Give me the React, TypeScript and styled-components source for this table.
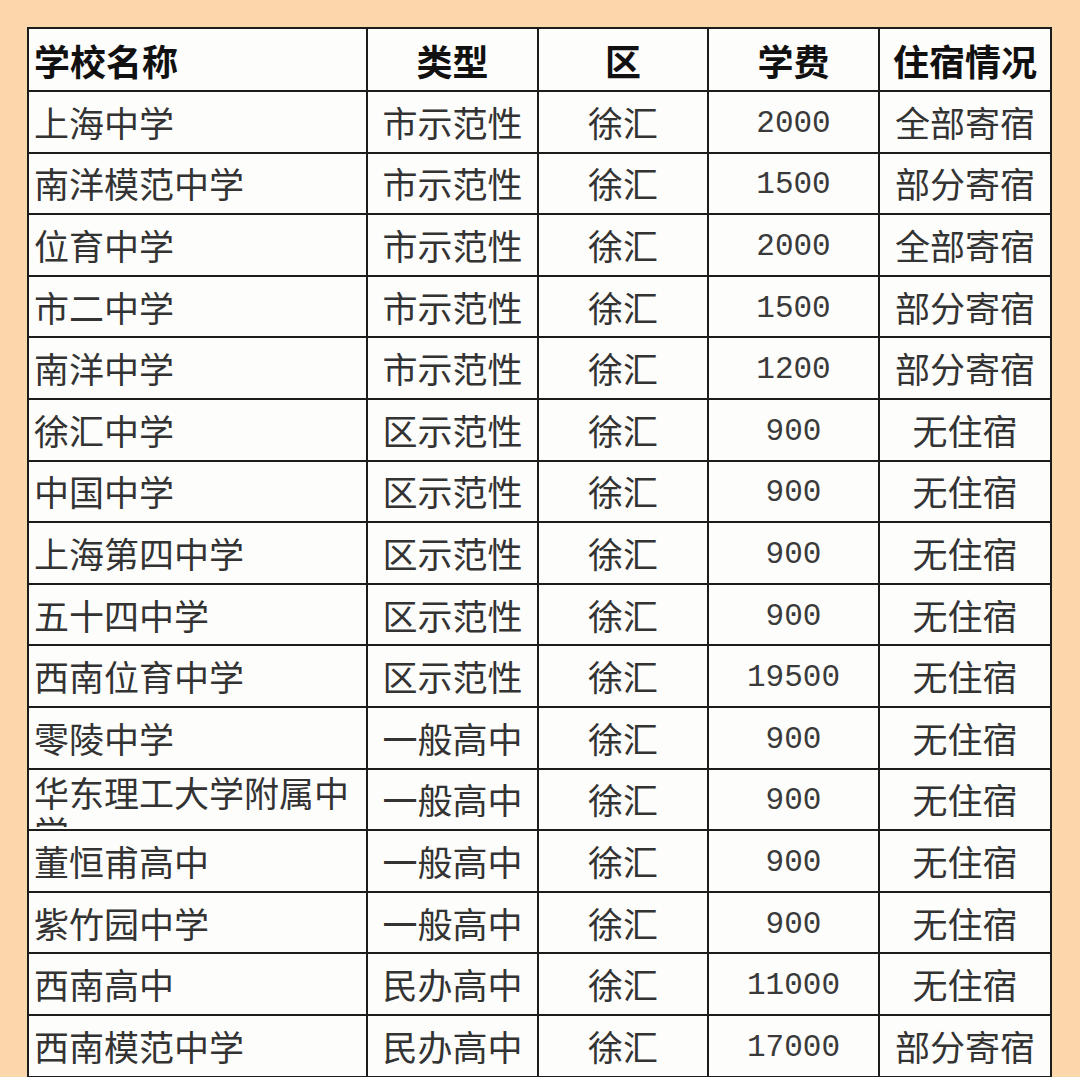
import React from "react";
import styled, { createGlobalStyle } from "styled-components";

type School = {
  name: string;
  type: string;
  district: string;
  fee: string;
  dorm: string;
};

const schools: School[] = [
  { name: "上海中学", type: "市示范性", district: "徐汇", fee: "2000", dorm: "全部寄宿" },
  { name: "南洋模范中学", type: "市示范性", district: "徐汇", fee: "1500", dorm: "部分寄宿" },
  { name: "位育中学", type: "市示范性", district: "徐汇", fee: "2000", dorm: "全部寄宿" },
  { name: "市二中学", type: "市示范性", district: "徐汇", fee: "1500", dorm: "部分寄宿" },
  { name: "南洋中学", type: "市示范性", district: "徐汇", fee: "1200", dorm: "部分寄宿" },
  { name: "徐汇中学", type: "区示范性", district: "徐汇", fee: "900", dorm: "无住宿" },
  { name: "中国中学", type: "区示范性", district: "徐汇", fee: "900", dorm: "无住宿" },
  { name: "上海第四中学", type: "区示范性", district: "徐汇", fee: "900", dorm: "无住宿" },
  { name: "五十四中学", type: "区示范性", district: "徐汇", fee: "900", dorm: "无住宿" },
  { name: "西南位育中学", type: "区示范性", district: "徐汇", fee: "19500", dorm: "无住宿" },
  { name: "零陵中学", type: "一般高中", district: "徐汇", fee: "900", dorm: "无住宿" },
  { name: "华东理工大学附属中学", type: "一般高中", district: "徐汇", fee: "900", dorm: "无住宿" },
  { name: "董恒甫高中", type: "一般高中", district: "徐汇", fee: "900", dorm: "无住宿" },
  { name: "紫竹园中学", type: "一般高中", district: "徐汇", fee: "900", dorm: "无住宿" },
  { name: "西南高中", type: "民办高中", district: "徐汇", fee: "11000", dorm: "无住宿" },
  { name: "西南模范中学", type: "民办高中", district: "徐汇", fee: "17000", dorm: "部分寄宿" },
];

const GlobalStyle = createGlobalStyle`
  html, body {
    margin: 0;
    padding: 0;
    background: #fcd7ab;
  }
  body {
    font-family: "Noto Sans CJK SC", "Noto Sans", sans-serif;
  }
`;

const Page = styled.div`
  width: 1080px;
  height: 1077px;
  overflow: hidden;
  padding: 27px 0 0 27px;
  box-sizing: border-box;
  background: #fcd7ab;
`;

const Table = styled.table`
  width: 1023px;
  border-collapse: collapse;
  table-layout: fixed;
  background: #fdfdfb;
  border: 2px solid #1c1c1c;
`;

const HeadCell = styled.th<{ $left?: boolean }>`
  height: 63px;
  box-sizing: border-box;
  padding: 0 ${(p) => (p.$left ? "5px" : "0")};
  border: 2px solid #1c1c1c;
  font-size: 36px;
  line-height: 40px;
  font-weight: 700;
  color: #111;
  text-align: ${(p) => (p.$left ? "left" : "center")};
  white-space: nowrap;
`;

const Cell = styled.td<{ $left?: boolean; $num?: boolean }>`
  height: 61.6px;
  box-sizing: border-box;
  padding: ${(p) => (p.$num ? "4px 0 0" : p.$left ? "0 5px" : "0")};
  border: 2px solid #1c1c1c;
  font-family: ${(p) =>
    p.$num
      ? '"Liberation Mono", "Courier New", monospace'
      : '"Noto Sans CJK SC", "Noto Sans", sans-serif'};
  font-size: ${(p) => (p.$num ? "31px" : "35px")};
  line-height: 40px;
  font-weight: 400;
  color: ${(p) => (p.$num ? "#3a3a3a" : "#333")};
  text-align: ${(p) => (p.$left ? "left" : "center")};
  vertical-align: middle;
  overflow: hidden;
`;

const NameClip = styled.div<{ $wrap: boolean }>`
  height: 56px;
  overflow: hidden;
  display: flex;
  align-items: ${(p) => (p.$wrap ? "flex-start" : "center")};
  padding-top: ${(p) => (p.$wrap ? "1px" : "0")};
  box-sizing: border-box;
  word-break: break-all;
`;

export default function App() {
  return (
    <Page>
      <GlobalStyle />
      <Table>
        <colgroup>
          <col style={{ width: 339 }} />
          <col style={{ width: 171 }} />
          <col style={{ width: 170 }} />
          <col style={{ width: 171 }} />
          <col style={{ width: 172 }} />
        </colgroup>
        <thead>
          <tr>
            <HeadCell $left>学校名称</HeadCell>
            <HeadCell>类型</HeadCell>
            <HeadCell>区</HeadCell>
            <HeadCell>学费</HeadCell>
            <HeadCell>住宿情况</HeadCell>
          </tr>
        </thead>
        <tbody>
          {schools.map((s) => (
            <tr key={s.name}>
              <Cell $left>
                <NameClip $wrap={s.name.length > 9}>{s.name}</NameClip>
              </Cell>
              <Cell>{s.type}</Cell>
              <Cell>{s.district}</Cell>
              <Cell $num>{s.fee}</Cell>
              <Cell>{s.dorm}</Cell>
            </tr>
          ))}
        </tbody>
      </Table>
    </Page>
  );
}
